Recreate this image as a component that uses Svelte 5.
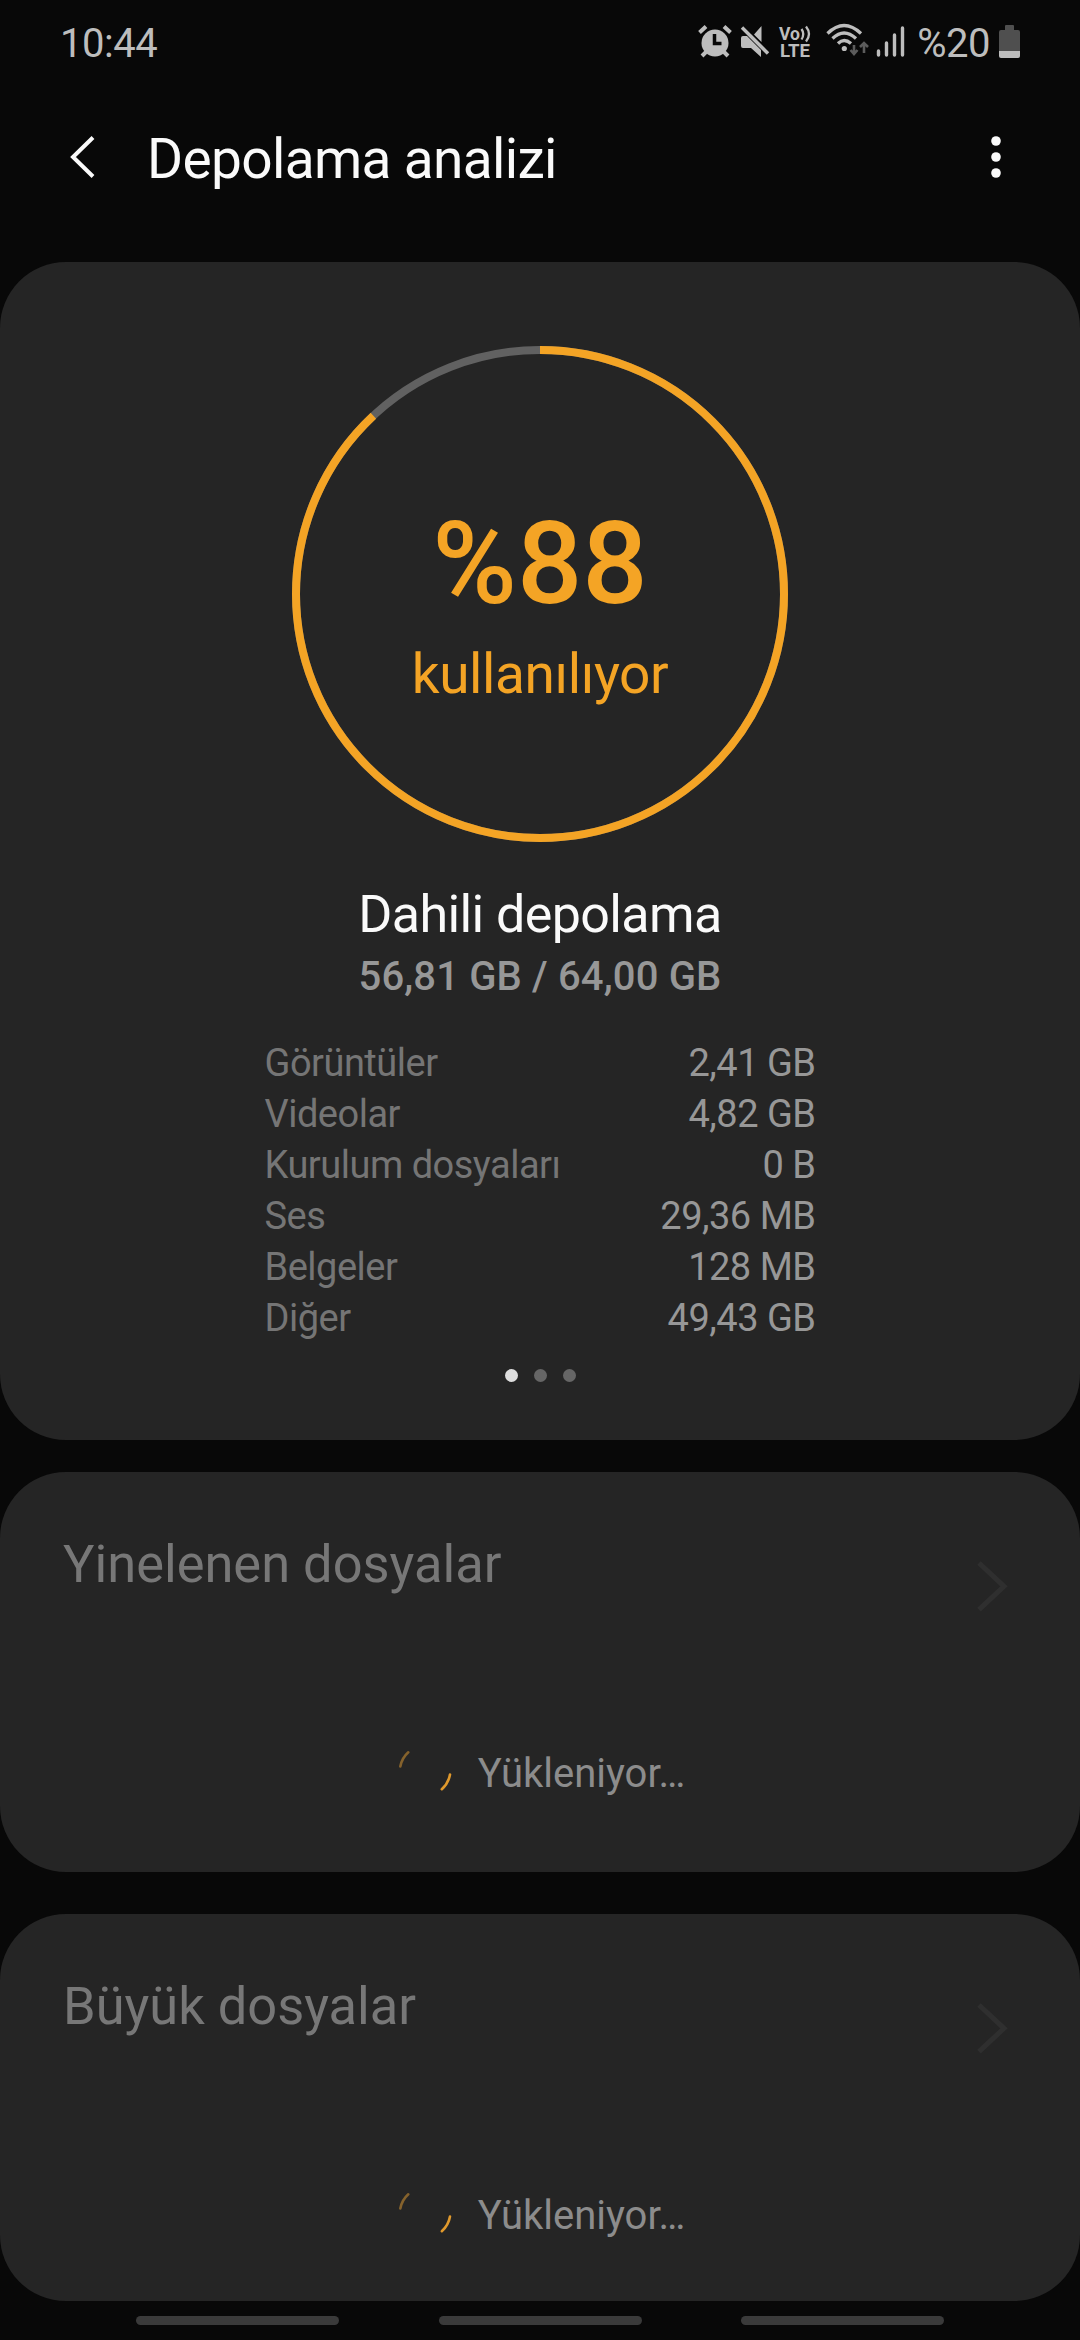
<script>
    const usedPercent = 88;
    const radius = 244;
    const circumference = 2 * Math.PI * radius;

    const categories = [
        { label: "Görüntüler", size: "2,41 GB" },
        { label: "Videolar", size: "4,82 GB" },
        { label: "Kurulum dosyaları", size: "0 B" },
        { label: "Ses", size: "29,36 MB" },
        { label: "Belgeler", size: "128 MB" },
        { label: "Diğer", size: "49,43 GB" },
    ];

    const sections = ["Yinelenen dosyalar", "Büyük dosyalar"];

    let activePage = $state(0);
    let usedLength = $derived((circumference * usedPercent) / 100);
</script>

<div class="screen">
    <div class="status-bar">
        <span class="clock">10:44</span>
        <svg class="status-icons" width="228" height="40" viewBox="696 22 228 40">
            <!-- alarm -->
            <g stroke="#bdbdbd" fill="none">
                <circle cx="715" cy="43" r="13.5" fill="#bdbdbd" stroke="none" />
                <path d="M699.5 32.5l6.5-6M724 26.5l6.5 6" stroke-width="4" />
                <path d="M706 52l-4 4M724 52l4 4" stroke-width="4" />
                <path d="M714.5 34v9.5h7" stroke="#080808" stroke-width="3.5" />
            </g>
            <!-- muted speaker -->
            <path d="M741 38q0-2 2-2h4l14 14v7l-10-9h-8q-2 0-2-2zM761.5 26v16l-7.5-7.5z" fill="#bdbdbd" />
            <path d="M742 27.5l26 26" stroke="#bdbdbd" stroke-width="3.4" />
            <!-- VoLTE -->
            <g fill="#bdbdbd" font-family="Roboto, sans-serif" font-weight="700">
                <text x="779" y="39.5" font-size="17.5" textLength="21" lengthAdjust="spacingAndGlyphs">Vo</text>
                <text x="780" y="57" font-size="18" textLength="30" lengthAdjust="spacingAndGlyphs">LTE</text>
            </g>
            <path d="M801.5 29q3.5 5 0 10.5M806 26.5q6 7.5 0 15" stroke="#bdbdbd" stroke-width="2.3" fill="none" />
            <!-- wifi -->
            <g stroke="#bdbdbd" stroke-width="3.3" fill="none">
                <path d="M827.5 33.5Q844 17.5 861 33.5" />
                <path d="M832.5 38.5Q844 27.5 856 38.5" />
                <path d="M838 43.5Q844 37.5 851 43.5" />
            </g>
            <circle cx="844.3" cy="48.5" r="2.6" fill="#bdbdbd" />
            <path d="M854 45v8M850.5 50l3.5 4 3.5-4M864 53v-9M860 47l4-4 4 4" stroke="#5c5c5c" stroke-width="2.6" fill="none" />
            <!-- signal -->
            <path d="M878.5 51v4M886.5 43v12M894.5 35v20M902.5 28v27" stroke="#bdbdbd" stroke-width="3.4" stroke-linecap="round" fill="none" />
        </svg>
        <span class="battery-text">%20</span>
        <svg class="battery" width="21" height="33" viewBox="0 0 21 33">
            <path d="M6 1q0-1 1-1h7q1 0 1 1v4h4q2 0 2 2v20H0V7q0-2 2-2h4z" fill="#4f4f4f" />
            <path d="M0 26h21v5q0 2-2 2H2q-2 0-2-2z" fill="#bdbdbd" />
        </svg>
    </div>

    <header class="app-bar">
        <svg class="back" width="28" height="46" viewBox="0 0 28 46">
            <path d="M25 3.5L5 23l20 19.5" stroke="#fafafa" stroke-width="4" fill="none" />
        </svg>
        <h1>Depolama analizi</h1>
        <svg class="more" width="12" height="44" viewBox="0 0 12 44" fill="#fafafa">
            <circle cx="6" cy="6" r="4.8" />
            <circle cx="6" cy="22" r="4.8" />
            <circle cx="6" cy="38" r="4.8" />
        </svg>
    </header>

    <main>
        <section class="card summary">
            <div class="ring">
                <svg width="496" height="496" viewBox="0 0 496 496">
                    <circle class="track" cx="248" cy="248" r={radius} />
                    <circle
                        class="used"
                        cx="248"
                        cy="248"
                        r={radius}
                        stroke-dasharray="{usedLength} {circumference}"
                        transform="rotate(-90 248 248)"
                    />
                </svg>
                <div class="ring-label">
                    <span class="percent">%{usedPercent}</span>
                    <span class="caption">kullanılıyor</span>
                </div>
            </div>

            <h2>Dahili depolama</h2>
            <p class="total">56,81 GB / 64,00 GB</p>

            <dl>
                {#each categories as item}
                    <div class="row">
                        <dt>{item.label}</dt>
                        <dd>{item.size}</dd>
                    </div>
                {/each}
            </dl>

            <div class="pager">
                {#each [0, 1, 2] as page}
                    <button
                        class:active={page === activePage}
                        aria-label={`${page + 1}`}
                        onclick={() => (activePage = page)}
                    ></button>
                {/each}
            </div>
        </section>

        {#each sections as title}
            <section class="card loading-card">
                <div class="card-head">
                    <h3>{title}</h3>
                    <svg width="34" height="54" viewBox="0 0 34 54">
                        <path d="M4 4l25 23.3L4 50.6" stroke="#2f2f2f" stroke-width="5" fill="none" />
                    </svg>
                </div>
                <div class="loading">
                    <svg width="56" height="56" viewBox="0 0 56 56" fill="none" stroke-width="2.6" stroke-linecap="round">
                        <path d="M3.3 23.5A25.5 25.5 0 0 1 11.3 9.3" stroke="#85622c" />
                        <path d="M53 31.5A25.5 25.5 0 0 1 44.8 46.2" stroke="#e0992c" />
                    </svg>
                    <span>Yükleniyor…</span>
                </div>
            </section>
        {/each}
    </main>

    <nav>
        <span></span>
        <span></span>
        <span></span>
    </nav>
</div>

<style>
    :global(body) {
        margin: 0;
        background: #080808;
    }

    .screen {
        display: flex;
        flex-direction: column;
        width: 1080px;
        height: 2340px;
        overflow: hidden;
        background: #080808;
        color: #fafafa;
        font-family: Roboto, sans-serif;
    }

    h1,
    h2,
    h3,
    p,
    dl,
    dd {
        margin: 0;
        font-weight: 400;
    }

    svg {
        display: block;
        flex: none;
    }

    .status-bar {
        display: flex;
        align-items: center;
        height: 86px;
        padding: 0 60px;
        color: #bdbdbd;
        font-size: 40px;
        letter-spacing: -0.5px;
        line-height: 86px;
    }

    .clock,
    .battery-text {
        padding-top: 2px;
    }

    .status-icons {
        margin: 0 -7px 2px auto;
        letter-spacing: 0;
    }

    .battery-text {
        margin-right: 9px;
    }

    .battery {
        margin-bottom: 3px;
    }

    .app-bar {
        display: flex;
        align-items: center;
        height: 146px;
        padding: 0 78px 0 68px;
        box-sizing: border-box;
    }

    .app-bar h1 {
        flex: 1;
        margin-left: 51px;
        font-size: 55px;
        letter-spacing: -0.65px;
        line-height: 146px;
    }

    .back,
    .more {
        margin-bottom: 5px;
    }

    .card {
        border-radius: 66px;
        background: #252525;
    }

    .summary {
        display: flex;
        flex-direction: column;
        align-items: center;
        height: 1178px;
        margin-top: 30px;
        padding-top: 84px;
        box-sizing: border-box;
    }

    .ring {
        position: relative;
        width: 496px;
        height: 496px;
    }

    .ring circle {
        fill: none;
        stroke-width: 8;
    }

    .ring .track {
        stroke: #616161;
    }

    .ring .used {
        stroke: #f4a425;
    }

    .ring-label {
        position: absolute;
        inset: 0;
        display: flex;
        flex-direction: column;
        align-items: center;
        padding-top: 149px;
        color: #f4a425;
    }

    .percent {
        font-size: 115px;
        font-weight: 500;
        line-height: 138px;
    }

    .caption {
        margin-top: 6px;
        font-size: 55px;
        letter-spacing: -0.4px;
        line-height: 70px;
    }

    h2 {
        margin-top: 43px;
        font-size: 52px;
        letter-spacing: -0.6px;
        line-height: 60px;
    }

    .total {
        margin-top: 2px;
        color: #979797;
        font-size: 40px;
        font-weight: 500;
        letter-spacing: 0.15px;
        line-height: 60px;
    }

    dl {
        width: 551px;
        margin-top: 31px;
    }

    .row {
        display: flex;
        justify-content: space-between;
        font-size: 38px;
        letter-spacing: -0.5px;
        line-height: 51px;
    }

    dt {
        color: #757575;
    }

    dd {
        color: #979797;
    }

    .pager {
        display: flex;
        gap: 16px;
        margin-top: 25px;
    }

    .pager button {
        width: 13px;
        height: 13px;
        padding: 0;
        border: none;
        border-radius: 50%;
        background: #666;
    }

    .pager button.active {
        background: #dedede;
    }

    .loading-card {
        height: 400px;
        margin-top: 32px;
    }

    .loading-card:last-child {
        height: 387px;
        margin-top: 42px;
    }

    .card-head {
        display: flex;
        justify-content: space-between;
        padding: 62px 71px 0 63px;
    }

    .card-head svg {
        margin-top: 25px;
    }

    h3 {
        color: #777;
        font-size: 52.4px;
        line-height: 60px;
    }

    .loading {
        display: flex;
        align-items: center;
        justify-content: center;
        gap: 25px;
        height: 60px;
        margin-top: 131px;
        padding-left: 2px;
        color: #8c8c8c;
        font-size: 40px;
        line-height: 60px;
    }

    .loading svg {
        margin-bottom: 7px;
    }

    nav {
        display: flex;
        justify-content: center;
        gap: 99.5px;
        margin-top: 15px;
    }

    nav span {
        width: 203px;
        height: 9px;
        border-radius: 5px;
        background: #3a3a3a;
    }
</style>
